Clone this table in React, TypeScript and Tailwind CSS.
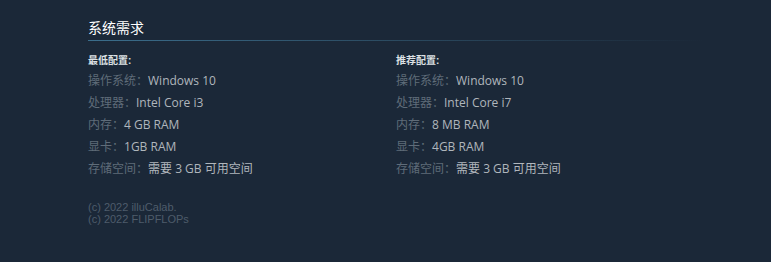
const minReq = [
  { label: "操作系统：", value: "Windows 10" },
  { label: "处理器：", value: "Intel Core i3" },
  { label: "内存：", value: "4 GB RAM" },
  { label: "显卡：", value: "1GB RAM" },
  { label: "存储空间：", value: "需要 3 GB 可用空间" },
];

const recReq = [
  { label: "操作系统：", value: "Windows 10" },
  { label: "处理器：", value: "Intel Core i7" },
  { label: "内存：", value: "8 MB RAM" },
  { label: "显卡：", value: "4GB RAM" },
  { label: "存储空间：", value: "需要 3 GB 可用空间" },
];

const ReqColumn = ({
  title,
  rows,
}: {
  title: string;
  rows: { label: string; value: string }[];
}) => {
  return (
    <div className="w-[308px]">
      <div className="text-[10px] leading-[14px] font-bold text-[#dde1e4]">{title}</div>
      <ul className="mt-[2px]">
        {rows.map((row) => (
          <li
            key={row.label}
            className="text-[12px] leading-[22px] whitespace-nowrap"
            style={{ fontFamily: '"Open Sans", "Noto Sans CJK SC", sans-serif' }}
          >
            <span className="text-[#5f6c79]">{row.label}</span>
            <span className="text-[#b0b6bc]">{row.value}</span>
          </li>
        ))}
      </ul>
    </div>
  );
};

export default function App() {
  return (
    <div
      className="w-[771px] h-[262px] bg-[#1b2838] pl-[88px] pt-[18px]"
      style={{ fontFamily: '"Liberation Sans", Arial, "Noto Sans CJK SC", sans-serif' }}
    >
      <div className="w-[616px]">
        <h2 className="text-[14px] leading-[20px] text-white pb-[2px]">系统需求</h2>
        <div className="h-px bg-gradient-to-r from-[#3b6e8c] via-[#2b4a60] to-transparent" />
        <div className="flex mt-[13px]">
          <ReqColumn title="最低配置:" rows={minReq} />
          <ReqColumn title="推荐配置:" rows={recReq} />
        </div>
        <div className="mt-[21px] text-[11px] leading-[12px] text-[#4e5c6b]">
          <div>(c) 2022 illuCalab.</div>
          <div>(c) 2022 FLIPFLOPs</div>
        </div>
      </div>
    </div>
  );
}
